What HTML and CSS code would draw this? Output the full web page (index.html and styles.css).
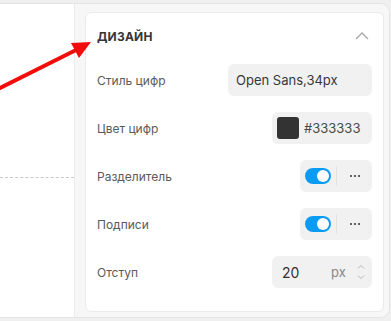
FILE: index.html
```html
<!DOCTYPE html>
<html lang="ru">
<head>
  <meta charset="UTF-8" />
  <meta name="viewport" content="width=device-width, initial-scale=1.0" />
  <title>Дизайн</title>
  <link rel="stylesheet" href="styles.css">
</head>
<body>
  <div class="app">
    <!-- Canvas preview (cropped) -->
    <div class="canvas">
      <div class="dash-line"></div>
    </div>

    <!-- Settings panel -->
    <aside class="panel">
      <div class="card">
        <div class="card-head">
          <span class="card-title">Дизайн</span>
          <svg class="chevron" width="14" height="8" viewBox="0 0 14 8">
            <path d="M1 7 L7 1 L13 7" fill="none" stroke="#a8a8a8" stroke-width="1.4" />
          </svg>
        </div>

        <div class="rows">
          <div class="row">
            <span class="label">Стиль цифр</span>
            <div class="field field-font">Open Sans,34px</div>
          </div>

          <div class="row">
            <span class="label">Цвет цифр</span>
            <div class="field field-color">
              <span class="swatch"></span>
              <span>#333333</span>
            </div>
          </div>

          <div class="row">
            <span class="label">Разделитель</span>
            <div class="field field-toggle">
              <span class="toggle"><span class="knob"></span></span>
              <span class="sep"></span>
              <span class="more"><i></i><i></i><i></i></span>
            </div>
          </div>

          <div class="row">
            <span class="label">Подписи</span>
            <div class="field field-toggle">
              <span class="toggle"><span class="knob"></span></span>
              <span class="sep"></span>
              <span class="more"><i></i><i></i><i></i></span>
            </div>
          </div>

          <div class="row">
            <span class="label">Отступ</span>
            <div class="field field-number">
              <span class="num">20</span>
              <span class="unit">px</span>
              <span class="spin">
                <svg width="8" height="5" viewBox="0 0 8 5"><path d="M1 4.5 L4 1.5 L7 4.5" fill="none" stroke="#b5b5b5" stroke-width="1" /></svg>
                <svg width="8" height="5" viewBox="0 0 8 5"><path d="M1 0.5 L4 3.5 L7 0.5" fill="none" stroke="#b5b5b5" stroke-width="1" /></svg>
              </span>
            </div>
          </div>
        </div>
      </div>
    </aside>
  </div>

  <!-- Annotation arrow over the layout -->
  <svg class="arrow" width="100" height="100" viewBox="0 0 100 100">
    <line x1="-4" y1="90" x2="76" y2="50" stroke="#f20d0d" stroke-width="4" />
    <polygon points="91,42 71,43 79,58" fill="#f20d0d" />
  </svg>
</body>
</html>
```

FILE: styles.css
```css
* {
  margin: 0;
  padding: 0;
  box-sizing: border-box;
  font-family: Inter, 'Noto Sans', sans-serif;
}
body {
  background-color: #efefef;
  width: 391px;
  height: 321px;
  overflow: hidden;
}
.app {
  display: flex;
  margin: 3px 1px 0 0;
  height: 315px;
  background-color: white;
  border: 1px solid #e4e4e4;
  border-left: none;
  border-radius: 0 10px 10px 0;
  overflow: hidden;
}
.canvas {
  width: 75px;
  flex-shrink: 0;
  border-right: 1px solid #ebebeb;
  padding-top: 173px;
}
.dash-line {
  border-top: 1px dashed #c8c8c8;
}
.panel {
  flex: 1;
  display: flex;
  background-color: #f7f7f7;
  padding: 8px 5px 5px 10px;
}
.card {
  flex: 1;
  background-color: white;
  border: 1px solid #eaeaea;
  border-radius: 6px;
  padding: 0 11px 0 11px;
}
.card-head {
  height: 46px;
  display: flex;
  align-items: center;
  justify-content: space-between;
}
.card-title {
  font-size: 12px;
  font-weight: 700;
  text-transform: uppercase;
  color: #363636;
  letter-spacing: 0.2px;
}
.chevron {
  margin-right: 3px;
}
.rows {
  display: flex;
  flex-direction: column;
  gap: 16px;
  margin-top: 5px;
}
.row {
  height: 32px;
  display: flex;
  align-items: center;
  justify-content: space-between;
}
.label {
  font-size: 12px;
  color: #5a5a5a;
}
.field {
  height: 32px;
  display: flex;
  align-items: center;
  background-color: #f1f1f1;
  border-radius: 6px;
  font-size: 13px;
  color: #383838;
}
.field-font {
  width: 144px;
  padding-left: 8px;
}
.field-color {
  width: 100px;
  padding-left: 5px;
  gap: 5px;
  color: #4a4a4a;
}
.swatch {
  width: 22px;
  height: 22px;
  border-radius: 3px;
  background-color: #333;
}
.field-toggle {
  width: 72px;
  padding-left: 5px;
}
.toggle {
  position: relative;
  width: 26px;
  height: 16px;
  border-radius: 8px;
  background-color: #0a9bf5;
}
.knob {
  position: absolute;
  top: 2px;
  right: 2px;
  width: 12px;
  height: 12px;
  border-radius: 50%;
  background-color: white;
}
.sep {
  width: 1px;
  height: 20px;
  background-color: #e2e2e2;
  margin-left: 5px;
}
.more {
  flex: 1;
  display: flex;
  justify-content: center;
  gap: 2px;
}
.more i {
  width: 2px;
  height: 2px;
  border-radius: 1px;
  background-color: #333;
}
.field-number {
  width: 100px;
  padding-left: 10px;
}
.num {
  font-size: 14px;
  color: #333;
  width: 37px;
}
.unit {
  font-size: 13px;
  color: #888;
  margin-left: 12px;
}
.spin {
  display: flex;
  flex-direction: column;
  gap: 6px;
  margin-left: 11px;
}
.spin svg {
  display: block;
}
.arrow {
  position: absolute;
  left: 0;
  top: 0;
}
```
